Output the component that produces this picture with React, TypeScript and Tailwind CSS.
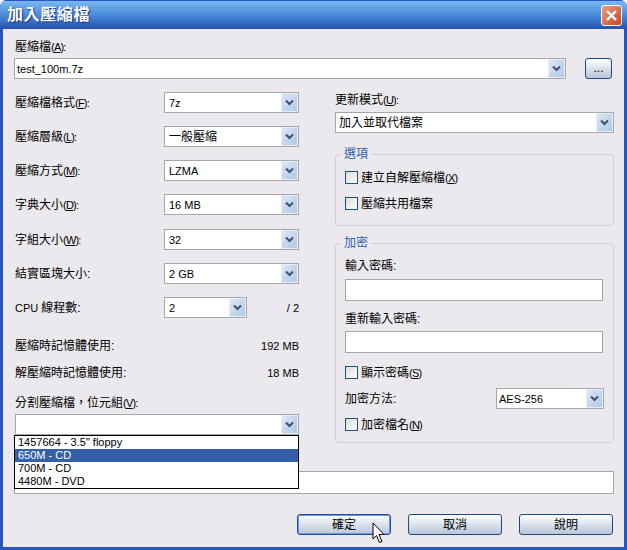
const font = '[font-family:"Liberation_Sans","Noto_Sans_CJK_TC",sans-serif]';

function Key({ k, colon = true }: { k: string; colon?: boolean }) {
  return (
    <span className="text-[11px] tracking-[-0.8px]">
      (<u>{k}</u>){colon ? ':' : ''}
    </span>
  );
}

function Arrow() {
  return (
    <div className="flex h-[19px] w-[17px] shrink-0 items-center justify-center border border-[#e6eef8] bg-gradient-to-br from-[#dce7f5] to-[#b0c8e6]">
      <svg width="9" height="7" viewBox="0 0 9 7">
        <path d="M1 1.5 L4.5 5 L8 1.5" fill="none" stroke="#3f5070" strokeWidth="2" />
      </svg>
    </div>
  );
}

function Combo({ value, width, pad = 'pl-[4px]' }: { value: string; width: string; pad?: string }) {
  const latin = /^[\x00-\x7f]*$/.test(value);
  return (
    <div className={`flex h-[21px] items-center justify-between border border-[#a7a6aa] bg-white ${pad} ${width}`}>
      <span className={latin ? 'text-[11px]' : ''}>{value}</span>
      <Arrow />
    </div>
  );
}

function Field({ label, value, width = 'w-[135px]' }: { label: React.ReactNode; value: string; width?: string }) {
  return (
    <div className="flex h-[21px] items-center">
      <span className="w-[149px] shrink-0">{label}</span>
      <Combo value={value} width={width} />
    </div>
  );
}

function Check({ label, className = '' }: { label: React.ReactNode; className?: string }) {
  return (
    <div className={`flex h-[13px] items-center gap-[3px] ${className}`}>
      <div className="h-[13px] w-[13px] shrink-0 border border-[#1c5180] bg-gradient-to-br from-[#dcdcd7] to-white" />
      <span>{label}</span>
    </div>
  );
}

function Group({ title, className, children }: { title: string; className: string; children: React.ReactNode }) {
  return (
    <div className={`relative rounded-[4px] border border-[#d0d0d4] px-[9px] ${className}`}>
      <span className="absolute top-[-8px] left-[5px] bg-[#ebe9ed] px-[3px] leading-[14px] text-[#2f5fb0]">{title}</span>
      {children}
    </div>
  );
}

function Button({ label, main = false }: { label: string; main?: boolean }) {
  return (
    <div
      className={`flex h-[21px] w-[94px] items-center justify-center rounded-[3px] border bg-gradient-to-b from-white to-[#b9c5d9] ${
        main ? 'border-[#1f4f9e] shadow-[inset_0_0_0_1px_#6f98d8]' : 'border-[#1f4a80]'
      }`}
    >
      {label}
    </div>
  );
}

export default function App() {
  return (
    <div className={`${font} relative flex h-[550px] w-[627px] flex-col overflow-hidden rounded-t-[7px] bg-[#2a55c0] text-[12px] leading-[14px] text-black`}>
      <div className="flex h-[29px] shrink-0 items-center justify-between border-t border-[#2a55c0] bg-gradient-to-b from-[#7ab8ee] via-[#4a8cdc] to-[#2450ae] pr-[5px] pl-[7px]">
        <span className="text-[16px] font-bold tracking-[0.6px] text-white [text-shadow:1px_1px_1px_#0f2f80]">加入壓縮檔</span>
        <div className="flex h-[21px] w-[21px] items-center justify-center rounded-[3px] border border-white bg-gradient-to-br from-[#e8a080] to-[#c8421c]">
          <svg width="13" height="13" viewBox="0 0 13 13">
            <path d="M2 2 L11 11 M11 2 L2 11" stroke="white" strokeWidth="2.4" />
          </svg>
        </div>
      </div>

      <div className="mx-[3px] mb-[3px] flex flex-1 flex-col bg-[#ebe9ed] pt-[11px] pr-[10px] pl-[12px]">
        <div className="h-[14px]">壓縮檔<Key k="A" /></div>
        <div className="mt-[4px] -ml-[1px] flex items-center justify-between pr-[2px]">
          <Combo value="test_100m.7z" width="w-[552px]" pad="pl-[2px]" />
          <div className="flex h-[21px] w-[27px] items-center justify-center rounded-[3px] border border-[#1f4a80] bg-gradient-to-b from-white to-[#b9c5d9] pb-[2px]">...</div>
        </div>

        <div className="mt-[13px] flex justify-between">
          <div className="flex w-[284px] flex-col">
            <div className="flex flex-col gap-[13px]">
              <Field label={<>壓縮檔格式<Key k="F" /></>} value="7z" />
              <Field label={<>壓縮層級<Key k="L" /></>} value="一般壓縮" />
              <Field label={<>壓縮方式<Key k="M" /></>} value="LZMA" />
              <Field label={<>字典大小<Key k="D" /></>} value="16 MB" />
              <div className="mt-[1px]">
                <Field label={<>字組大小<Key k="W" /></>} value="32" />
              </div>
              <Field label="結實區塊大小:" value="2 GB" />
              <div className="flex items-center justify-between">
                <Field label={<><span className="text-[11px]">CPU </span>線程數:</>} value="2" width="w-[83px]" />
                <span className="text-[11px]">/ 2</span>
              </div>
            </div>
            <div className="mt-[21px] flex h-[14px] justify-between">
              <span>壓縮時記憶體使用:</span>
              <span className="text-[11px]">192 MB</span>
            </div>
            <div className="mt-[13px] flex h-[14px] justify-between">
              <span>解壓縮時記憶體使用:</span>
              <span className="text-[11px]">18 MB</span>
            </div>
            <div className="mt-[16px] h-[14px]">分割壓縮檔，位元組<Key k="V" /></div>
            <div className="mt-[4px]">
              <Combo value="" width="w-[284px]" />
            </div>
          </div>

          <div className="flex w-[279px] flex-col">
            <div className="mt-[1px] h-[14px]">更新模式<Key k="U" /></div>
            <div className="mt-[5px]">
              <Combo value="加入並取代檔案" width="w-[279px]" pad="pl-[3px]" />
            </div>
            <Group title="選項" className="mt-[21px] h-[72px] pt-[16px]">
              <Check label={<>建立自解壓縮檔<Key k="X" colon={false} /></>} />
              <Check label="壓縮共用檔案" className="mt-[13px]" />
            </Group>
            <Group title="加密" className="mt-[17px] h-[200px] pt-[15px]">
              <div className="h-[14px]">輸入密碼:</div>
              <div className="mt-[6px] h-[22px] w-[258px] border border-[#a7a6aa] bg-white" />
              <div className="mt-[11px] h-[14px]">重新輸入密碼:</div>
              <div className="mt-[5px] h-[22px] w-[258px] border border-[#a7a6aa] bg-white" />
              <Check label={<>顯示密碼<Key k="S" colon={false} /></>} className="mt-[13px]" />
              <div className="mt-[9px] flex items-center justify-between">
                <span>加密方法:</span>
                <Combo value="AES-256" width="w-[108px]" pad="pl-[2px]" />
              </div>
              <Check label={<>加密檔名<Key k="N" colon={false} /></>} className="mt-[9px]" />
            </Group>
          </div>
        </div>

        <div className="mt-[28px] -ml-[1px] h-[23px] w-[600px] border border-[#a7a6aa] bg-white" />

        <div className="mt-[20px] flex justify-end gap-[17px] pr-[1px]">
          <Button label="確定" main />
          <Button label="取消" />
          <Button label="說明" />
        </div>
      </div>

      {/* open dropdown list */}
      <div className="absolute top-[435px] left-[14px] w-[285px] border border-black bg-white text-[11px] leading-[13px]">
        <div className="h-[13px] pl-[3px]">1457664 - 3.5" floppy</div>
        <div className="h-[13px] bg-[#3360a8] pl-[3px] text-white">650M - CD</div>
        <div className="h-[13px] pl-[3px]">700M - CD</div>
        <div className="h-[13px] pl-[3px]">4480M - DVD</div>
      </div>

      {/* mouse cursor */}
      <svg className="absolute top-[522px] left-[372px]" width="14" height="22" viewBox="0 0 14 22">
        <path d="M1 1 L1 17 L4.5 13.5 L7.5 20.5 L10 19.5 L7 12.5 L12 12.5 Z" fill="white" stroke="black" strokeWidth="1" />
      </svg>
    </div>
  );
}
